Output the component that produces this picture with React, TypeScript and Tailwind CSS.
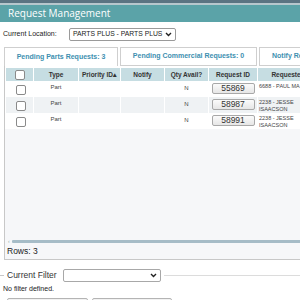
import React from 'react';

const cols = 'grid grid-cols-[27px_44px_41px_43px_43px_48px_60px] gap-x-[1px]';

const rows = [
  { id: '55869', by: ['6688 - PAUL MA'], alt: false },
  { id: '58987', by: ['2238 - JESSE', 'ISAACSON'], alt: true },
  { id: '58991', by: ['2238 - JESSE', 'ISAACSON'], alt: false },
];

const Box = () => (
  <span className="block w-[10px] h-[10px] border border-[#8a8a8a] rounded-[2px] bg-white" />
);

export default function App() {
  return (
    <div className="w-[300px] h-[300px] overflow-hidden bg-white font-['Liberation_Sans',Arial,sans-serif] text-[#222]">
      <div className="h-[3px] bg-[#5b7482]" />
      <div className="h-[2px] bg-[#b7c7cd]" />
      <div className="h-[17px] bg-[#5ba3a8] pl-[8px] flex items-center text-white text-[10px] font-['Open_Sans',sans-serif]">
        Request Management
      </div>

      <div className="flex items-center mt-[6px] pl-[3px] h-[13px]">
        <span className="text-[7px] w-[66px]">Current Location:</span>
        <div className="flex items-center h-[13px] w-[107px] border border-[#9a9a9a] rounded-[2px] pl-[3px] pr-[3px]">
          <span className="text-[6.8px] whitespace-nowrap flex-1">PARTS PLUS - PARTS PLUS</span>
          <svg className="shrink-0 ml-[1px]" width="7" height="5" viewBox="0 0 7 5"><path d="M1 1l2.5 2.5L6 1" stroke="#222" strokeWidth="1.4" fill="none" /></svg>
        </div>
      </div>

      <div className="mt-[6px] pl-[4px] flex items-end w-[340px]">
        <div className="w-[114px] h-[19px] border border-[#cfcfcf] border-b-0 bg-white flex items-center justify-center text-[7px] font-bold text-[#3d8fb0] whitespace-nowrap">
          Pending Parts Requests: 3
        </div>
        <div className="ml-[2px] w-[137px] h-[19px] border border-[#cfcfcf] bg-white flex items-center justify-center text-[7px] font-bold text-[#3d8fb0] whitespace-nowrap">
          Pending Commercial Requests: 0
        </div>
        <div className="ml-[2px] w-[80px] h-[19px] border border-[#cfcfcf] bg-white flex items-center pl-[12px] text-[7px] font-bold text-[#3d8fb0] whitespace-nowrap">
          Notify Requests
        </div>
      </div>

      <div className="ml-[4px] w-[320px] h-[194px] border border-[#c8c8c8] border-t-0 flex flex-col bg-[#f6f7f9]">
        <div className="bg-white pt-[2px]">
          <div className={`${cols} pl-[1px] h-[13px]`}>
            <div className="bg-[#c6dde2] flex items-center justify-center"><Box /></div>
            {['Type', 'Priority ID\u25B4', 'Notify', 'Qty Avail?', 'Request ID', 'Requested'].map((h) => (
              <div key={h} className="bg-[#c6dde2] flex items-center justify-center text-[6.5px] font-bold text-[#333] whitespace-nowrap overflow-hidden">
                {h}
              </div>
            ))}
          </div>
          {rows.map((r) => (
            <div key={r.id} className={`${cols} pl-[1px] h-[16px]`}>
              {[0, 1, 2, 3, 4, 5, 6].map((c) => (
                <div key={c} className={`${r.alt ? 'bg-[#eff2f4]' : 'bg-white'} relative`}>
                  {c === 0 && <div className="pt-[4px] pl-[10px]"><Box /></div>}
                  {c === 1 && <div className="text-[6px] text-center pt-[2px] text-[#444]">Part</div>}
                  {c === 4 && <div className="text-[6px] text-center pt-[3px] text-[#444]">N</div>}
                  {c === 5 && (
                    <div className="mt-[2px] mx-auto w-[43px] h-[11px] border border-[#a8a8a8] rounded-[2px] bg-gradient-to-b from-[#fbfbfb] to-[#e6e6e6] flex items-center justify-center text-[8.5px] text-[#333]">
                      {r.id}
                    </div>
                  )}
                  {c === 6 && (
                    <div className="text-[5.5px] leading-[6.5px] pt-[2px] pl-[1px] text-[#444] whitespace-nowrap">
                      {r.by.map((l) => <div key={l}>{l}</div>)}
                    </div>
                  )}
                </div>
              ))}
            </div>
          ))}
        </div>
        <div className="flex-1" />
        <div className="flex items-center pl-[3px] h-[5px]">
          <span className="text-[5px] text-[#8aa] leading-none mr-[2px]">&lsaquo;</span>
          <div className="flex-1 h-[3px] bg-[#a6bcc7] rounded-[1px]" />
        </div>
        <div className="h-[14px] pl-[2px] text-[8.5px] flex items-center mb-[1px]">Rows: 3</div>
      </div>

      <div className="mt-[9px] flex items-center h-[13px]">
        <div className="w-[4px] h-px bg-[#c8c8c8]" />
        <span className="ml-[3px] text-[8.5px] text-[#333] w-[56px]">Current Filter</span>
        <div className="w-[98px] h-[13px] border border-[#a8a8a8] rounded-[2px] flex items-center justify-end pr-[3px]">
          <svg width="7" height="5" viewBox="0 0 7 5"><path d="M1 1l2.5 2.5L6 1" stroke="#222" strokeWidth="1.4" fill="none" /></svg>
        </div>
        <div className="ml-[3px] flex-1 h-[1px] bg-[#dcdcdc]" />
      </div>
      <div className="mt-[2px] pl-[3px] text-[7px] text-[#222]">No filter defined.</div>
      <div className="mt-[3px] flex pl-[7px] gap-[4px]">
        <div className="w-[81px] h-[12px] border border-[#b4b4b4] rounded-[2px] bg-[#f2f2f2]" />
        <div className="w-[80px] h-[12px] border border-[#b4b4b4] rounded-[2px] bg-[#f2f2f2]" />
      </div>
    </div>
  );
}
